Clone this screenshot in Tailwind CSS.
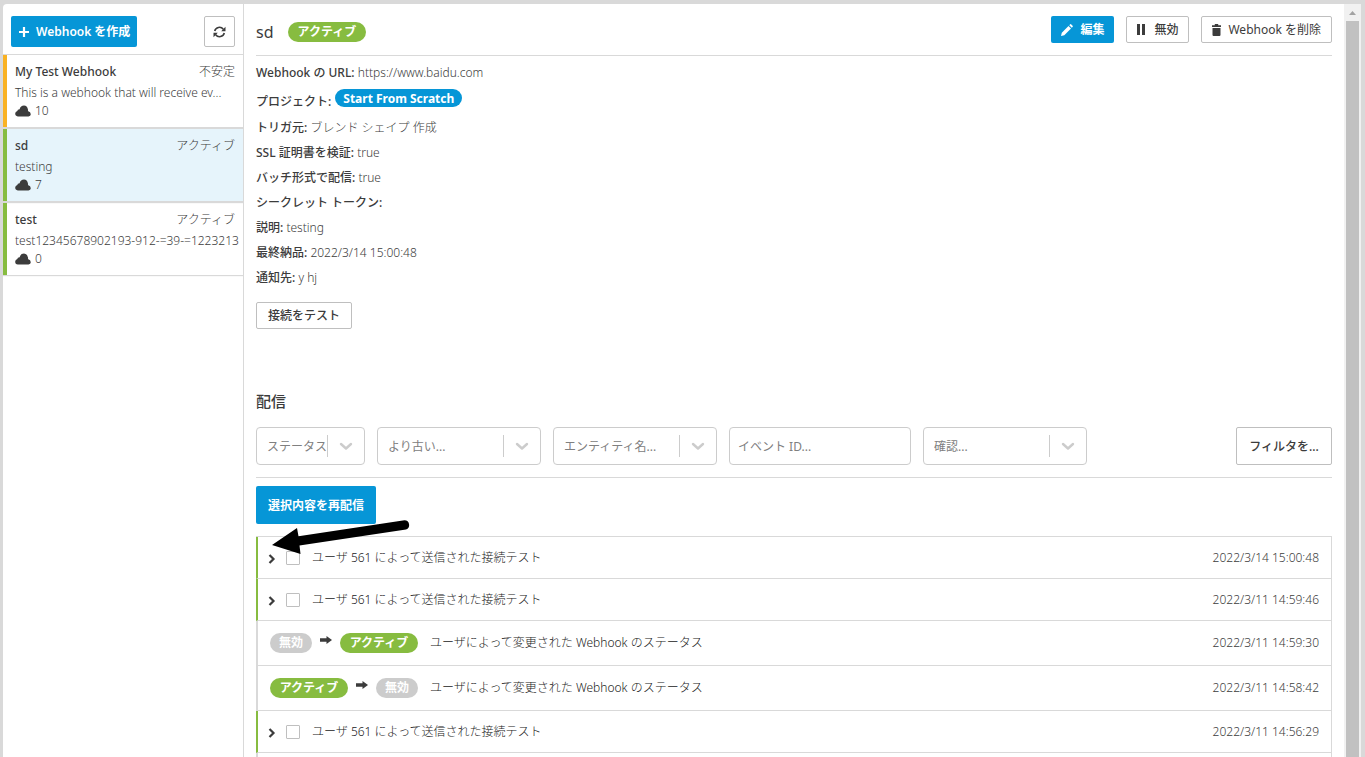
<!DOCTYPE html>
<html lang="ja">
<head>
<meta charset="utf-8">
<meta name="viewport" content="width=device-width, initial-scale=1">
<title>Webhook</title>
<script src="https://cdn.jsdelivr.net/npm/@tailwindcss/browser@4"></script>
</head>
<body class="flex h-screen overflow-hidden bg-[#d9d9d9] pt-1 pr-1 pl-[3px] font-['Noto_Sans','Noto_Sans_CJK_JP',sans-serif] text-xs leading-4 text-[#3c3c3c]">
<svg class="hidden" aria-hidden="true">
  <symbol id="cloud" viewBox="0 0 16 12"><path d="M2.800 11.500A2.900 2.900 0 0 1 .2 8.600Q.3 6.600 2.300 6.100Q2.400 4.400 4.600 4.200Q5.600 .600 9 .600Q12.300 .800 12.900 4.300Q13.300 5.400 12.900 6.100Q15.800 6.800 15.800 9.200Q15.700 11.300 13.500 11.500Z" fill="currentColor"/></symbol>
  <symbol id="chev" viewBox="0 0 20 20"><path d="M5 8L10 12.500L15 8" fill="none" stroke="currentColor" stroke-width="2.400" stroke-linecap="round" stroke-linejoin="round"/></symbol>
  <symbol id="expand" viewBox="0 0 8 10"><path d="M1.500 1L5.500 5L1.500 9" fill="none" stroke="currentColor" stroke-width="2.200"/></symbol>
  <symbol id="arrow" viewBox="0 0 12 8"><path d="M0 2.300H6.500V0L12 4L6.500 8V5.700H0Z" fill="currentColor"/></symbol>
</svg>

<aside class="flex w-[241px] shrink-0 flex-col rounded-tl border-r border-[#d9d9d9] bg-white">
  <div class="flex items-center justify-between border-b border-[#d9d9d9] px-2 pt-3 pb-[7px]">
    <button class="flex h-[31px] items-center gap-[7px] rounded-xs bg-[#0696d7] pr-[7px] pl-2 font-semibold text-white">
      <svg class="size-[10px]" viewBox="0 0 10 10"><path d="M5 0V10M0 5H10" stroke="currentColor" stroke-width="2.200"/></svg>Webhook を作成</button>
    <button aria-label="更新" class="flex size-[31px] items-center justify-center rounded-xs border border-[#bfbfbf]">
      <svg class="h-3 w-[13px]" viewBox="0 0 13 12"><path d="M1.700 5A4.900 4.900 0 0 1 10.300 3.200M11.300 7A4.900 4.900 0 0 1 2.700 8.800" fill="none" stroke="currentColor" stroke-width="1.600"/><path d="M12.500 .800V5.200H8.200ZM.500 11.200V6.800H4.800Z" fill="currentColor"/></svg>
    </button>
  </div>
  <ul class="flex flex-col gap-[2px]">
    <li class="h-[72px] border-l-4 border-[#f9b223] px-2 pt-[9px] shadow-[0_1px_1px_1px_#d9d9d9]">
      <div class="flex justify-between"><span class="font-medium">My Test Webhook</span><span class="font-light">不安定</span></div>
      <p class="mt-[5px] whitespace-nowrap font-light">This is a webhook that will receive ev...</p>
      <div class="mt-[2px] flex items-center gap-1 font-light"><svg class="h-3 w-4"><use href="#cloud"/></svg>10</div>
    </li>
    <li class="h-[72px] border-l-4 border-[#87bc40] bg-[#e6f4fb] px-2 pt-[9px] shadow-[0_1px_1px_1px_#d9d9d9]">
      <div class="flex justify-between"><span class="font-medium">sd</span><span class="font-light">アクティブ</span></div>
      <p class="mt-[5px] whitespace-nowrap font-light">testing</p>
      <div class="mt-[2px] flex items-center gap-1 font-light"><svg class="h-3 w-4"><use href="#cloud"/></svg>7</div>
    </li>
    <li class="h-[72px] border-l-4 border-[#87bc40] px-2 pt-[9px] shadow-[0_1px_1px_0_#d9d9d9]">
      <div class="flex justify-between"><span class="font-medium">test</span><span class="font-light">アクティブ</span></div>
      <p class="mt-[5px] whitespace-nowrap font-light">test12345678902193-912-=39-=1223213</p>
      <div class="mt-[2px] flex items-center gap-1 font-light"><svg class="h-3 w-4"><use href="#cloud"/></svg>0</div>
    </li>
  </ul>
</aside>

<main class="min-w-0 flex-1 overflow-hidden bg-white px-3">
  <header class="flex justify-between border-b border-[#d9d9d9] pt-3 pb-3">
    <div class="flex h-[27px] items-center gap-[14px] pt-1"><h1 class="text-base leading-5">sd</h1><span class="flex h-5 items-center rounded-full bg-[#87bc40] px-[10px] font-bold text-white">アクティブ</span></div>
    <div class="flex gap-3">
      <button class="flex h-[27px] items-center gap-[7px] rounded-xs bg-[#0696d7] px-[10px] font-bold text-white">
        <svg class="size-3" viewBox="0 0 12 12"><path d="M0 12L.800 8.700L7.500 2L10 4.500L3.300 11.200ZM8.300 1.200L9.200 .300Q9.700 -.100 10.300 .400L11.600 1.700Q12.100 2.300 11.700 2.800L10.800 3.700Z" fill="currentColor"/></svg>編集</button>
      <button class="flex h-[27px] items-center gap-[9px] rounded-xs border border-[#bfbfbf] px-[10px] font-medium">
        <svg class="h-[11px] w-2" viewBox="0 0 8 11"><path d="M0 0H3V11H0ZM5 0H8V11H5Z" fill="currentColor"/></svg>無効</button>
      <button class="flex h-[27px] items-center gap-[7px] rounded-xs border border-[#bfbfbf] px-[10px]">
        <svg class="h-3 w-[9px]" viewBox="0 0 9 12"><path d="M0 1.200H2.800V0H6.200V1.200H9V3H0ZM.500 4H8.500V11Q8.400 12 7.500 12H1.500Q.600 12 .500 11Z" fill="currentColor"/></svg>Webhook を削除</button>
    </div>
  </header>

  <dl class="pt-1 leading-[25px] [&_dd]:inline [&_dd]:font-light [&_dt]:inline [&_dt]:font-medium [&>div]:h-[25px]">
    <div><dt>Webhook の URL:</dt> <dd>https://www.baidu.com</dd></div>
    <div class="flex gap-1 pb-[30px]"><dt class="pt-1">プロジェクト:</dt> <dd class="pt-1"><span class="flex h-[18px] items-center rounded-full bg-[#0696d7] px-2 font-bold text-white">Start From Scratch</span></dd></div>
    <div><dt>トリガ元:</dt> <dd>ブレンド シェイプ 作成</dd></div>
    <div><dt>SSL 証明書を検証:</dt> <dd>true</dd></div>
    <div><dt>バッチ形式で配信:</dt> <dd>true</dd></div>
    <div><dt>シークレット トークン:</dt> <dd></dd></div>
    <div><dt>説明:</dt> <dd>testing</dd></div>
    <div><dt>最終納品:</dt> <dd>2022/3/14 15:00:48</dd></div>
    <div><dt>通知先:</dt> <dd>y hj</dd></div>
  </dl>
  <button class="mt-3 block h-[27px] rounded-xs border border-[#bfbfbf] px-[11px] font-medium">接続をテスト</button>

  <h2 class="mt-[62px] text-[15px] leading-5 font-medium">配信</h2>
  <div class="mt-4 flex justify-between border-b border-[#d9d9d9] pb-3">
    <div class="flex gap-3 text-[#808080]">
      <div class="relative w-[109px]"><select aria-label="ステータス" class="h-[38px] w-full appearance-none rounded border border-[#ccc] pt-[2px] pl-[10px]"><option>ステータス</option></select><span class="pointer-events-none absolute inset-y-2 right-0 flex w-[38px] items-center justify-center border-l border-[#ccc] pr-[2px] text-[#ccc]"><svg class="size-5"><use href="#chev"/></svg></span></div>
      <div class="relative w-[164px]"><select aria-label="より古い" class="h-[38px] w-full appearance-none rounded border border-[#ccc] pt-[2px] pl-[10px]"><option>より古い...</option></select><span class="pointer-events-none absolute inset-y-2 right-0 flex w-[38px] items-center justify-center border-l border-[#ccc] pr-[2px] text-[#ccc]"><svg class="size-5"><use href="#chev"/></svg></span></div>
      <div class="relative w-[164px]"><select aria-label="エンティティ名" class="h-[38px] w-full appearance-none rounded border border-[#ccc] pt-[2px] pl-[10px]"><option>エンティティ名...</option></select><span class="pointer-events-none absolute inset-y-2 right-0 flex w-[38px] items-center justify-center border-l border-[#ccc] pr-[2px] text-[#ccc]"><svg class="size-5"><use href="#chev"/></svg></span></div>
      <input type="text" aria-label="イベント ID" placeholder="イベント ID..." class="h-[38px] w-[182px] rounded border border-[#ccc] px-2 placeholder:text-[#808080]">
      <div class="relative w-[164px]"><select aria-label="確認" class="h-[38px] w-full appearance-none rounded border border-[#ccc] pt-[2px] pl-[10px]"><option>確認...</option></select><span class="pointer-events-none absolute inset-y-2 right-0 flex w-[38px] items-center justify-center border-l border-[#ccc] pr-[2px] text-[#ccc]"><svg class="size-5"><use href="#chev"/></svg></span></div>
    </div>
    <button class="h-[38px] w-24 rounded-xs border border-[#bfbfbf] pt-[2px] font-medium">フィルタを...</button>
  </div>

  <div class="relative pt-2">
    <button class="block h-[38px] rounded-xs bg-[#0696d7] px-3 pt-[2px] font-bold text-white">選択内容を再配信</button>
    <svg class="pointer-events-none absolute top-[41px] left-4 h-9 w-[140px]" viewBox="0 0 140 36" aria-hidden="true"><path d="M0 26L25 9L26.500 17.300L132.500 1.200A4.800 4.800 0 0 1 134 10.500L27.500 26.500L28.500 35Z" fill="#000"/></svg>
  </div>

  <ul class="mt-3 border-t border-r border-[#d9d9d9] [&>li]:flex [&>li]:items-center [&>li]:pr-3">
    <li class="h-[42px] border-l-2 border-l-[#87bc40] border-b border-b-[#d9d9d9] pl-[10px]">
      <button aria-label="展開" class="mt-[3px] w-[18px]"><svg class="h-[10px] w-2"><use href="#expand"/></svg></button>
      <input type="checkbox" id="d1" class="size-[14px] appearance-none rounded-[1px] border border-[#bfbfbf]">
      <label for="d1" class="flex-1 pl-3 font-light text-[#222]">ユーザ 561 によって送信された接続テスト</label><time class="font-light">2022/3/14 15:00:48</time>
    </li>
    <li class="h-[42px] border-l-2 border-l-[#87bc40] border-b border-b-[#d9d9d9] pl-[10px]">
      <button aria-label="展開" class="mt-[3px] w-[18px]"><svg class="h-[10px] w-2"><use href="#expand"/></svg></button>
      <input type="checkbox" id="d2" class="size-[14px] appearance-none rounded-[1px] border border-[#bfbfbf]">
      <label for="d2" class="flex-1 pl-3 font-light text-[#222]">ユーザ 561 によって送信された接続テスト</label><time class="font-light">2022/3/11 14:59:46</time>
    </li>
    <li class="h-[45px] border-l-2 border-b border-[#d9d9d9] pl-3">
      <span class="flex h-5 items-center rounded-full bg-[#ccc] px-[9px] font-bold text-white">無効</span><svg class="mx-2 mb-[6px] h-2 w-3"><use href="#arrow"/></svg><span class="flex h-5 w-[78px] items-center justify-center rounded-full bg-[#87bc40] font-bold text-white">アクティブ</span>
      <span class="flex-1 pl-3 font-light text-[#222]">ユーザによって変更された Webhook のステータス</span><time class="font-light">2022/3/11 14:59:30</time>
    </li>
    <li class="h-[45px] border-l-2 border-b border-[#d9d9d9] pl-3">
      <span class="flex h-5 w-[78px] items-center justify-center rounded-full bg-[#87bc40] font-bold text-white">アクティブ</span><svg class="mx-2 mb-[6px] h-2 w-3"><use href="#arrow"/></svg><span class="flex h-5 items-center rounded-full bg-[#ccc] px-[9px] font-bold text-white">無効</span>
      <span class="flex-1 pl-3 font-light text-[#222]">ユーザによって変更された Webhook のステータス</span><time class="font-light">2022/3/11 14:58:42</time>
    </li>
    <li class="h-[42px] border-l-2 border-l-[#87bc40] border-b border-b-[#d9d9d9] pl-[10px]">
      <button aria-label="展開" class="mt-[3px] w-[18px]"><svg class="h-[10px] w-2"><use href="#expand"/></svg></button>
      <input type="checkbox" id="d3" class="size-[14px] appearance-none rounded-[1px] border border-[#bfbfbf]">
      <label for="d3" class="flex-1 pl-3 font-light text-[#222]">ユーザ 561 によって送信された接続テスト</label><time class="font-light">2022/3/11 14:56:29</time>
    </li>
    <li class="h-[45px] border-l-2 border-b border-[#d9d9d9]"></li>
  </ul>
</main>

<div class="flex w-[17px] shrink-0 flex-col items-center bg-[#f1f1f1]" aria-hidden="true">
  <svg class="h-[17px] w-[17px] shrink-0" viewBox="0 0 17 17"><path d="M5 11L8.500 7L12 11Z" fill="#a3a3a3"/></svg>
  <div class="w-[13px] flex-1 bg-[#c1c1c1]"></div>
</div>
</body>
</html>
